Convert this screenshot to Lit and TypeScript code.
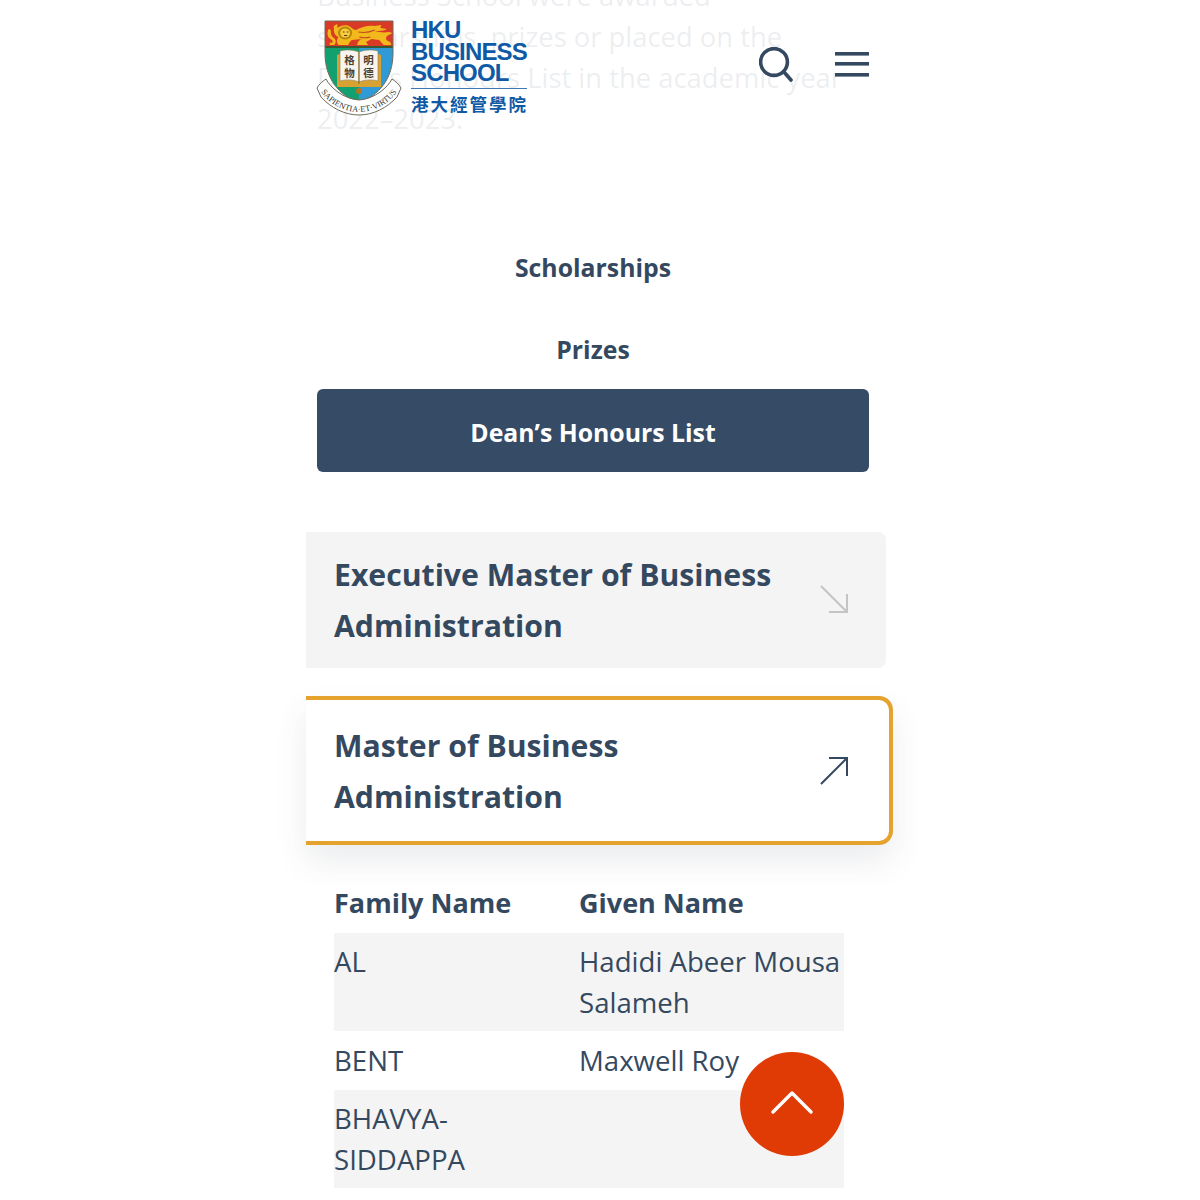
import { LitElement, html, css, svg } from "lit";
import { customElement } from "lit/decorators.js";

const lion = svg`
  <g transform="translate(6 1) scale(1.1 1)">
  <path d="M14 9c3-3 9-4 12-1 2 2 3 3 5 3 5-3 11-5 17-4l6-1-1 3 6 1c-3 2-7 2-11 2 3 1 8 2 13 1l3 1-5 3c-2 3 0 5 3 6l1 3H56l-4-5-7-1-5 3 2 3H32c0-3 2-5 4-6-3 0-6 1-9 1-2 2-3 4-3 5h-9c-2-3-2-5 0-8-3-1-5-5-4-9-1-1-1-2 3-4z" fill="#f2b91d"/>
  <path d="M6 10c-2 4-1 9 3 11 1 1 1 2 0 3-2-1-2 0-2 2h4c2-2 2-5 0-7-3-2-3-5-3-8z" fill="#f2b91d"/>
  <circle cx="21" cy="14" r="6.4" fill="#b8860b"/>
  <circle cx="21" cy="14" r="4.5" fill="#f6cd3f"/>
  <path d="M19 13h1.5M22.5 13H24M20 16.5h3" stroke="#5a3a08" stroke-width="1"/>
  <path d="M33 13c5 1 11 0 15-2M34 18c3 1 7 1 10 0" stroke="#c0491d" stroke-width="1" fill="none"/>
  </g>
`;

const shield = svg`
  <svg class="shield" viewBox="0 0 86 98" width="86" height="98" aria-hidden="true">
    <defs>
      <clipPath id="sh"><path d="M9 3h68v32c0 26-14 42-34 50C23 77 9 61 9 35z"/></clipPath>
      <path id="arc" d="M3 71c10 16 26 23 40 23s30-7 40-23"/>
    </defs>
    <g clip-path="url(#sh)">
      <rect x="9" y="3" width="34" height="84" fill="#12a071"/>
      <rect x="43" y="3" width="34" height="84" fill="#2f9ad6"/>
      <rect x="9" y="3" width="68" height="27" fill="#d93a26"/>
      <rect x="9" y="28" width="68" height="2" fill="#3a5a33"/>
    </g>
    <path d="M9 3h68v32c0 26-14 42-34 50C23 77 9 61 9 35z" fill="none" stroke="#6e6a5c" stroke-width="1"/>
    ${lion}
    <path d="M21 37c7-3 15-3 22 0 7-3 15-3 22 0v32H21z" fill="#d8a233"/>
    <path d="M24 33c7-2 14-1 19 1v30c-5-2-12-3-19-1z" fill="#f7f5ee" stroke="#8b7b56" stroke-width=".6"/>
    <path d="M43 34c5-2 12-3 19-1v30c-7-2-14-1-19 1z" fill="#f7f5ee" stroke="#8b7b56" stroke-width=".6"/>
    <path d="M43 34v32" stroke="#8b6a22" stroke-width="1"/>
    <text x="33.5" y="46" class="han">格</text>
    <text x="52.5" y="46" class="han">明</text>
    <text x="33.5" y="59" class="han">物</text>
    <text x="52.5" y="59" class="han">德</text>
    <circle cx="43" cy="73" r="3" fill="#b5751d"/>
    <path d="M1 70c2-4 6-7 9-9 4 8 17 20 33 21 16-1 29-13 33-21 3 2 7 5 9 9l-4 9C71 90 57 97 43 97S15 90 5 79z" fill="#fff" stroke="#6e6a5c" stroke-width="1"/>
    <text class="motto"><textPath href="#arc" startOffset="50%" text-anchor="middle">SAPIENTIA·ET·VIRTUS</textPath></text>
  </svg>
`;

@customElement("app-root")
export class AppRoot extends LitElement {
  static styles = css`
    :host {
      display: block;
      position: relative;
      width: 1200px;
      height: 1200px;
      overflow: hidden;
      background: #fff;
      color: #34495f;
      font-family: "Open Sans", "Noto Sans", sans-serif;
    }
    .page { margin-left: 306px; width: 588px; }
    .intro {
      margin: -25px 0 0;
      padding: 0 40px 0 11px;
      font-size: 27.4px;
      line-height: 41px;
    }
    .header {
      position: absolute;
      top: 0;
      left: 306px;
      width: 588px;
      height: 140px;
      background: rgba(255, 255, 255, 0.91);
      display: flex;
      align-items: flex-start;
      box-sizing: border-box;
      padding: 18px 25px 0 10px;
    }
    .shield { flex: none; display: block; }
    .han {
      font: 700 10.5px "Noto Sans CJK TC", sans-serif;
      fill: #4a4030;
      text-anchor: middle;
    }
    .motto {
      font: 8.4px "Liberation Serif", serif;
      fill: #34382f;
    }
    .wordmark {
      margin: 1px 0 0 9px;
      width: 116px;
      color: #0f5aa6;
      font-family: "Liberation Sans", Arial, sans-serif;
      font-weight: 700;
      font-size: 24px;
      line-height: 21.5px;
      letter-spacing: -0.85px;
    }
    .cn {
      border-top: 1px solid #3f77b5;
      margin-top: 4px;
      padding-top: 3px;
      font-family: "Noto Sans CJK TC", sans-serif;
      font-size: 17.5px;
      line-height: 24px;
      letter-spacing: 2px;
      white-space: nowrap;
    }
    .tools {
      margin-left: auto;
      display: flex;
      align-items: center;
      gap: 42px;
      padding-top: 29px;
    }
    .tools svg { display: block; }
    .tabs {
      margin: 87px 25px 0 11px;
      display: flex;
      flex-direction: column;
    }
    .tab {
      height: 82px;
      display: flex;
      align-items: center;
      justify-content: center;
      font-size: 24.8px;
      font-weight: 700;
      border-radius: 6px;
    }
    .tab.active { background: #364b65; color: #fff; margin-top: -1px; height: 83px; padding-top: 2px; box-sizing: border-box; }
    .card {
      box-sizing: border-box;
      display: flex;
      align-items: center;
      justify-content: space-between;
      padding: 17px 38px 17px 28px;
      font-size: 30.2px;
      font-weight: 700;
      line-height: 51px;
    }
    .card.closed {
      margin-top: 60px;
      width: 580px;
      height: 136px;
      background: #f4f4f4;
      border-radius: 0 8px 8px 0;
    }
    .card.closed svg { margin-bottom: 2px; }
    .card.open {
      margin-top: 28px;
      width: 587px;
      height: 149px;
      background: #fff;
      border: solid #e5a22d;
      border-width: 4px 4px 4px 0;
      border-radius: 0 14px 14px 0;
      box-shadow: 0 16px 32px rgba(60, 70, 90, 0.1);
      padding: 15px 41px 15px 28px;
    }
    .card svg { flex: none; display: block; }
    .table {
      margin: 34px 0 0 28px;
      width: 510px;
      display: grid;
      grid-template-columns: 245px 265px;
      font-size: 27.6px;
      line-height: 41px;
    }
    .cell { padding: 8px 0; }
    .cell.single { padding: 9px 0; }
    .head { font-size: 27px; font-weight: 700; line-height: 48px; padding: 0 0 6px; }
    .shade { background: #f4f4f4; }
    .fab {
      position: absolute;
      left: 740px;
      top: 1052px;
      width: 104px;
      height: 104px;
      border-radius: 50%;
      background: #e03a05;
      display: flex;
      align-items: center;
      justify-content: center;
    }
    .fab svg { margin-bottom: 4px; }
  `;

  render() {
    return html`
      <div class="page">
        <p class="intro">Business School were awarded<br />scholarships, prizes or placed on the<br />Dean’s Honours List in the academic year<br />2022–2023.</p>
        <div class="tabs">
          <div class="tab">Scholarships</div>
          <div class="tab">Prizes</div>
          <div class="tab active">Dean’s Honours List</div>
        </div>
        <div class="card closed">
          <span>Executive Master of Business<br />Administration</span>
          <svg width="28" height="28" viewBox="0 0 28 28" fill="none" stroke="#c4c4c4" stroke-width="2"><path d="M1 1l26 26M27 9v18H9"/></svg>
        </div>
        <div class="card open">
          <span>Master of Business<br />Administration</span>
          <svg width="28" height="28" viewBox="0 0 28 28" fill="none" stroke="#34495f" stroke-width="2"><path d="M1 27L27 1M9 1h18v18"/></svg>
        </div>
        <div class="table">
          <div class="cell head">Family Name</div>
          <div class="cell head">Given Name</div>
          <div class="cell shade">AL</div>
          <div class="cell shade">Hadidi Abeer Mousa Salameh</div>
          <div class="cell single">BENT</div>
          <div class="cell single">Maxwell Roy</div>
          <div class="cell shade">BHAVYA-<br />SIDDAPPA</div>
          <div class="cell shade"></div>
        </div>
      </div>
      <div class="header">
        ${shield}
        <div class="wordmark">
          HKU<br />BUSINESS<br />SCHOOL
          <div class="cn">港大經管學院</div>
        </div>
        <div class="tools">
          <svg width="34" height="36" viewBox="0 0 34 36" fill="none" stroke="#34495f" stroke-width="3.6"><circle cx="15" cy="15" r="13.4"/><path d="M24.5 24.5L32 33" stroke-linecap="round"/></svg>
          <svg width="34" height="26" viewBox="0 0 34 26" fill="#34495f"><rect y="0" width="34" height="3.6"/><rect y="10" width="34" height="3.6"/><rect y="21" width="34" height="3.6"/></svg>
        </div>
      </div>
      <div class="fab">
        <svg width="42" height="24" viewBox="0 0 42 24" fill="none" stroke="#fff" stroke-width="3.4" stroke-linecap="round" stroke-linejoin="round"><path d="M2 22L21 3l19 19"/></svg>
      </div>
    `;
  }
}
